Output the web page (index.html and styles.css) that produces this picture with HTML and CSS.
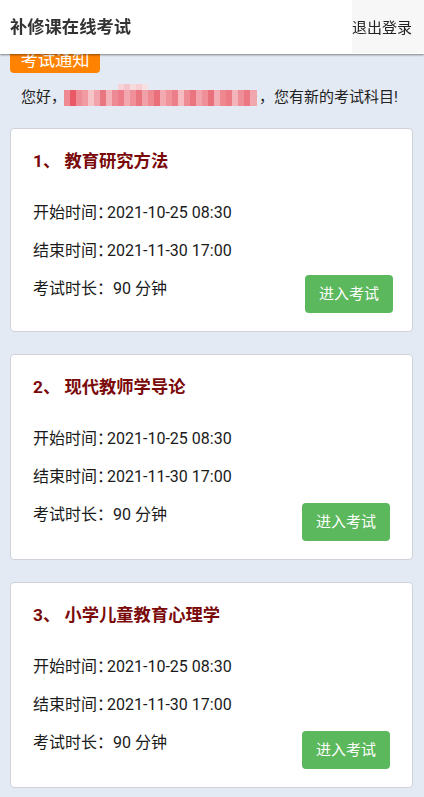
FILE: index.html
```html
<!DOCTYPE html>
<html lang="zh-CN">
<head>
<meta charset="utf-8">
<meta name="viewport" content="width=device-width, initial-scale=1">
<title>补修课在线考试</title>
<link rel="stylesheet" href="styles.css">
</head>
<body>
<header class="topbar">
  <h1 class="topbar-title">补修课在线考试</h1>
  <a class="logout" href="#">退出登录</a>
</header>
<main class="content">
  <div class="notice-badge">考试通知</div>
  <p class="greeting"><span class="greet-hello">您好，</span><span class="masked-name" aria-label="姓名已隐藏"></span><span>，您有新的考试科目!</span></p>

  <section class="exam-card">
    <h2 class="exam-title">1、 教育研究方法</h2>
    <div class="exam-row">开始时间<span class="colon">：</span>2021-10-25 08:30</div>
    <div class="exam-row">结束时间<span class="colon">：</span>2021-11-30 17:00</div>
    <div class="exam-row exam-row-last">
      <span>考试时长<span class="colon colon-wide">：</span> 90 分钟</span>
      <a class="enter-btn" href="#">进入考试</a>
    </div>
  </section>

  <section class="exam-card exam-card-alt">
    <h2 class="exam-title">2、 现代教师学导论</h2>
    <div class="exam-row">开始时间<span class="colon">：</span>2021-10-25 08:30</div>
    <div class="exam-row">结束时间<span class="colon">：</span>2021-11-30 17:00</div>
    <div class="exam-row exam-row-last">
      <span>考试时长<span class="colon colon-wide">：</span> 90 分钟</span>
      <a class="enter-btn" href="#">进入考试</a>
    </div>
  </section>

  <section class="exam-card exam-card-alt">
    <h2 class="exam-title">3、 小学儿童教育心理学</h2>
    <div class="exam-row">开始时间<span class="colon">：</span>2021-10-25 08:30</div>
    <div class="exam-row">结束时间<span class="colon">：</span>2021-11-30 17:00</div>
    <div class="exam-row exam-row-last">
      <span>考试时长<span class="colon colon-wide">：</span> 90 分钟</span>
      <a class="enter-btn" href="#">进入考试</a>
    </div>
  </section>
</main>
</body>
</html>
```

FILE: styles.css
```css
* { box-sizing: border-box; }

html, body {
  margin: 0;
  padding: 0;
}

body {
  background: #e4eaf4;
  font-family: Roboto, "Noto Sans CJK SC", sans-serif;
  color: #1a1a1a;
}

.topbar {
  position: fixed;
  top: 0;
  left: 0;
  right: 0;
  height: 54px;
  background: #ffffff;
  display: flex;
  align-items: center;
  justify-content: space-between;
  padding-left: 10px;
  box-shadow: 0 1px 2px rgba(0, 0, 0, 0.45);
  z-index: 10;
}

.topbar-title {
  margin: 0;
  font-size: 17.3px;
  font-weight: bold;
  color: #333333;
  line-height: 24px;
}

.logout {
  align-self: stretch;
  display: flex;
  align-items: center;
  width: 72px;
  height: 53px;
  padding: 0;
  background: #f7f7f7;
  color: #222222;
  font-size: 15px;
  text-decoration: none;
}

.content {
  padding: 47px 11px 12px 10px;
}

.notice-badge {
  width: 90px;
  height: 26px;
  background: #ff8200;
  color: #ffffff;
  font-size: 17.3px;
  line-height: 26px;
  text-align: center;
  border-radius: 4px;
}

.greeting {
  margin: 12px 0 19px 11px;
  font-size: 15px;
  line-height: 24px;
  color: #222222;
  display: flex;
  align-items: center;
  white-space: nowrap;
}

.greet-hello {
  display: inline-block;
  width: 43px;
  overflow: visible;
}

.masked-name {
  display: inline-block;
  width: 193px;
  height: 22px;
  margin: -4px 2px 0 0;
  background:
    linear-gradient(90deg,
      transparent 0 54px, #f6d3d6 54px 60px, #f3c4c9 60px 66px, #f7dadd 66px 72px,
      #f5cfd3 72px 78px, #f8e0e2 78px 84px, transparent 84px 100%),
    linear-gradient(90deg,
      #ef8a93 0 6px, #e95a66 6px 12px, #ee8c95 12px 18px, #f19aa2 18px 24px,
      #f5c3c8 24px 30px, #f0a3aa 30px 36px, #e87782 36px 42px, #f3b2b8 42px 48px,
      #ee8a93 48px 54px, #ec7d88 54px 60px, #f2a8ae 60px 66px, #ef9099 66px 72px,
      #ea7580 72px 78px, #f0a0a8 78px 84px, #ee8891 84px 90px, #e96f7a 90px 96px,
      #f2aab0 96px 102px, #ef929a 102px 108px, #ec7e89 108px 114px, #f4bcc1 114px 120px,
      #ee8c95 120px 126px, #ea7480 126px 132px, #f1a4ab 132px 138px, #ef8f98 138px 144px,
      #e9717c 144px 150px, #f2aeb4 150px 156px, #ee8790 156px 162px, #ec7b86 162px 168px,
      #f3b4ba 168px 174px, #ee8e97 174px 180px, #eb7883 180px 186px, #f1a7ae 186px 193px);
  background-size: 100% 6px, 100% 16px;
  background-position: 0 0, 0 6px;
  background-repeat: no-repeat;
}

.exam-card {
  background: #ffffff;
  border: 1px solid #cfd2d8;
  border-radius: 4px;
  padding: 20px 19px 18px 22px;
  margin-bottom: 22px;
}

.exam-title {
  margin: 0 0 21px;
  font-size: 17.3px;
  line-height: 24px;
  font-weight: bold;
  color: #7a0a0a;
}

.exam-row {
  font-size: 16px;
  line-height: 38px;
  color: #1a1a1a;
  white-space: nowrap;
}

.colon {
  font-feature-settings: "halt" 1;
  margin-right: 2px;
}

.colon-wide {
  margin-right: 4px;
}

.exam-row-last {
  display: flex;
  justify-content: space-between;
  align-items: flex-start;
}

.enter-btn {
  margin-top: 5px;
  width: 88px;
  height: 38px;
  line-height: 38px;
  text-align: center;
  background: #5cb85c;
  color: #ffffff;
  font-size: 15px;
  border-radius: 4px;
  text-decoration: none;
}

.exam-card-alt .enter-btn {
  margin-top: 7px;
  margin-right: 3px;
}
```
